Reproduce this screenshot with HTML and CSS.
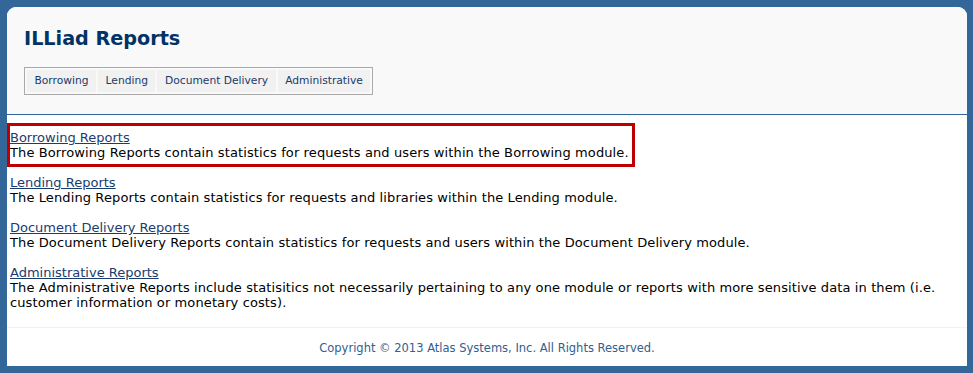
FILE: index.html
```html
<!DOCTYPE html>
<html>
<head>
<meta charset="utf-8">
<title>ILLiad Reports</title>
<link rel="stylesheet" href="styles.css">
</head>
<body>
<div class="panel">
  <div class="header">
    <h1 class="title">ILLiad Reports</h1>
    <div class="nav">
      <a class="nav-item" href="#">Borrowing</a>
      <a class="nav-item" href="#">Lending</a>
      <a class="nav-item" href="#">Document Delivery</a>
      <a class="nav-item" href="#">Administrative</a>
    </div>
  </div>
  <div class="content">
    <div class="section highlight">
      <a class="report-link" href="#">Borrowing Reports</a>
      <div class="desc">The Borrowing Reports contain statistics for requests and users within the Borrowing module.</div>
    </div>
    <div class="section">
      <a class="report-link" href="#">Lending Reports</a>
      <div class="desc">The Lending Reports contain statistics for requests and libraries within the Lending module.</div>
    </div>
    <div class="section">
      <a class="report-link" href="#">Document Delivery Reports</a>
      <div class="desc">The Document Delivery Reports contain statistics for requests and users within the Document Delivery module.</div>
    </div>
    <div class="section">
      <a class="report-link" href="#">Administrative Reports</a>
      <div class="desc">The Administrative Reports include statisitics not necessarily pertaining to any one module or reports with more sensitive data in them (i.e. customer information or monetary costs).</div>
    </div>
  </div>
  <div class="footer">Copyright © 2013 Atlas Systems, Inc. All Rights Reserved.</div>
</div>
</body>
</html>
```
FILE: styles.css
```css
html, body {
  margin: 0;
  padding: 0;
}
body {
  background: #336699;
  font-family: Verdana, "DejaVu Sans", sans-serif;
  padding: 7px 6px 7px 7px;
}
.panel {
  width: 960px;
  height: 359px;
  background: #ffffff;
  border-radius: 9px 9px 0 0;
  display: flex;
  flex-direction: column;
}
.header {
  background: #f9f9f9;
  border-radius: 9px 9px 0 0;
  border-bottom: 1px solid #336699;
  padding: 20px 0 19px 17px;
  height: 68px;
}
.title {
  margin: 0 0 17px 0;
  font-size: 19.2px;
  line-height: 23px;
  font-weight: bold;
  color: #003366;
}
.nav {
  display: inline-flex;
  border: 1px solid #aaaaaa;
  background: #f9f9f9;
  padding: 2px;
  gap: 2px;
}
.nav-item {
  display: block;
  background: #f1f1f1;
  color: #1a3a6a;
  font-size: 10.7px;
  line-height: 22px;
  padding: 0 7.5px;
  text-decoration: none;
}
.content {
  padding: 8px 0 0 0;
  display: flex;
  flex-direction: column;
  gap: 1px;
  flex: 1;
}
.section {
  border: 3px solid transparent;
  padding: 4px 3px 4px 0;
  width: fit-content;
  font-size: 13px;
  line-height: 15px;
}
.section.highlight {
  border-color: #c00000;
}
.report-link {
  color: #1a3c6e;
  text-decoration: underline;
}
.desc {
  color: #000000;
  letter-spacing: 0.11px;
}
.footer {
  border-top: 1px solid #f2f2f2;
  height: 38px;
  text-align: center;
  font-size: 11.5px;
  line-height: 40px;
  color: #2f6090;
}
```
